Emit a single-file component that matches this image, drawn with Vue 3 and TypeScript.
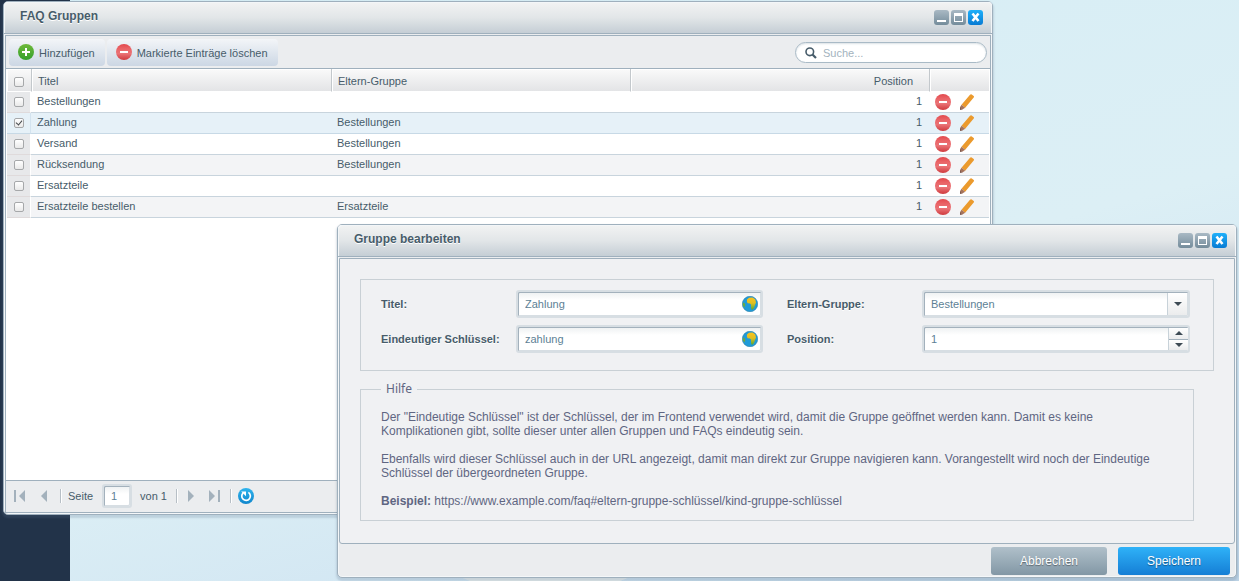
<script setup lang="ts">
import { computed, ref } from 'vue'

interface Group {
  id: number
  title: string
  parent: string
  position: number
  checked: boolean
}

const groups = ref<Group[]>([
  { id: 1, title: 'Bestellungen', parent: '', position: 1, checked: false },
  { id: 2, title: 'Zahlung', parent: 'Bestellungen', position: 1, checked: true },
  { id: 3, title: 'Versand', parent: 'Bestellungen', position: 1, checked: false },
  { id: 4, title: 'Rücksendung', parent: 'Bestellungen', position: 1, checked: false },
  { id: 5, title: 'Ersatzteile', parent: '', position: 1, checked: false },
  { id: 6, title: 'Ersatzteile bestellen', parent: 'Ersatzteile', position: 1, checked: false },
])

const search = ref('')
const page = ref('1')
const form = ref({ title: 'Zahlung', key: 'zahlung', parent: 'Bestellungen', position: '1' })

const allChecked = computed({
  get: () => groups.value.every((g) => g.checked),
  set: (value: boolean) => groups.value.forEach((g) => (g.checked = value)),
})

function step(delta: number) {
  form.value.position = String(Number(form.value.position) + delta)
}
</script>

<template>
  <main class="desktop">
    <svg class="defs" width="0" height="0" aria-hidden="true">
      <defs>
        <linearGradient id="g-red" x1="0" y1="0" x2="0" y2="1">
          <stop offset="0" stop-color="#e2494d" />
          <stop offset="0.3" stop-color="#ea6467" />
          <stop offset="0.6" stop-color="#ea7376" />
          <stop offset="1" stop-color="#cf3a3e" />
        </linearGradient>
        <linearGradient id="g-green" x1="0" y1="0" x2="0" y2="1">
          <stop offset="0" stop-color="#6fb93a" />
          <stop offset="1" stop-color="#33a02c" />
        </linearGradient>
        <linearGradient id="g-blue" x1="0" y1="0" x2="0" y2="1">
          <stop offset="0" stop-color="#2fb4ee" />
          <stop offset="1" stop-color="#0f86cc" />
        </linearGradient>
        <linearGradient id="g-land" x1="0" y1="0" x2="0" y2="1">
          <stop offset="0" stop-color="#fbc21c" />
          <stop offset="0.45" stop-color="#e0bf22" />
          <stop offset="1" stop-color="#4fa53a" />
        </linearGradient>
        <symbol id="i-minus" viewBox="0 0 16 16">
          <circle cx="8" cy="8" r="8" fill="url(#g-red)" />
          <rect x="4" y="7" width="8" height="2" fill="#fff" />
        </symbol>
        <symbol id="i-plus" viewBox="0 0 16 16">
          <circle cx="8" cy="8" r="8" fill="url(#g-green)" />
          <path d="M7 4h2v3h3v2H9v3H7V9H4V7h3z" fill="#fff" />
        </symbol>
        <symbol id="i-pencil" viewBox="0 0 16 16">
          <path d="M11 .8Q11.800-.2 12.700.4L14.700 2Q15.300 2.700 14.700 3.500L6.200 13.800 2.500 10.800z" fill="#eb9a2d" />
          <path d="M2.500 10.800 6.200 13.800 3.300 15.500 1 13.200z" fill="#a7735a" />
          <path d="M1 12.800 3.500 15.400 1 16z" fill="#80584c" />
        </symbol>
        <symbol id="i-globe" viewBox="0 0 16 16">
          <circle cx="8" cy="8" r="7.700" fill="#209bd8" stroke="#2b7fa6" stroke-width=".6" />
          <path d="M5 3.600 7 1.800 10.500 1.500 13.200 3.300 14 6.500 13 9 11.800 12.500 10 14 9 12.500 9 8.500 7.800 7.400 5.600 7.200 4.900 5.800z" fill="url(#g-land)" />
          <path d="M.800 6.600 2.600 7.300 3.400 9 2.400 11.500 1 9.500z" fill="#69a944" />
        </symbol>
        <symbol id="i-min" viewBox="0 0 15 15"><rect x="3" y="10" width="9" height="2" fill="#fff" /></symbol>
        <symbol id="i-max" viewBox="0 0 15 15">
          <path d="M3 3h9v9H3zM4 6v5h7V6z" fill="#fff" fill-rule="evenodd" />
        </symbol>
        <symbol id="i-close" viewBox="0 0 15 15">
          <path d="M4.500 3.500 10.500 11M10.500 3.500 4.500 11" stroke="#fff" stroke-width="2.600" />
        </symbol>
      </defs>
    </svg>

    <div class="dock"></div>

    <section class="window list-window" aria-labelledby="list-title">
      <header class="titlebar">
        <h1 id="list-title">FAQ Gruppen</h1>
        <div class="tools">
          <button type="button" aria-label="Minimieren"><svg><use href="#i-min" /></svg></button>
          <button type="button" aria-label="Maximieren"><svg><use href="#i-max" /></svg></button>
          <button type="button" class="close" aria-label="Schließen"><svg><use href="#i-close" /></svg></button>
        </div>
      </header>
      <div class="body">
        <div class="toolbar">
          <button type="button" class="tool"><svg class="icon"><use href="#i-plus" /></svg>Hinzufügen</button>
          <button type="button" class="tool"><svg class="icon"><use href="#i-minus" /></svg>Markierte Einträge löschen</button>
          <label class="search">
            <svg width="12" height="12" viewBox="0 0 12 12" aria-hidden="true">
              <circle cx="4.800" cy="4.800" r="3.800" fill="none" stroke="#475c6a" stroke-width="1.600" />
              <path d="M7.500 7.500 11 11" stroke="#475c6a" stroke-width="2.200" />
            </svg>
            <input v-model="search" type="text" placeholder="Suche..." aria-label="Suche" />
          </label>
        </div>

        <div class="grid">
          <table>
            <colgroup>
              <col class="c-check" /><col class="c-title" /><col /><col /><col class="c-actions" />
            </colgroup>
            <thead>
              <tr>
                <th class="check"><input v-model="allChecked" type="checkbox" aria-label="Alle auswählen" /></th>
                <th>Titel</th>
                <th>Eltern-Gruppe</th>
                <th class="num">Position</th>
                <th></th>
              </tr>
            </thead>
            <tbody>
              <tr v-for="g in groups" :key="g.id" :class="{ selected: g.checked }">
                <td class="check"><input v-model="g.checked" type="checkbox" :aria-label="g.title" /></td>
                <td>{{ g.title }}</td>
                <td>{{ g.parent }}</td>
                <td class="num">{{ g.position }}</td>
                <td class="actions">
                  <div>
                    <button type="button" aria-label="Löschen"><svg class="icon"><use href="#i-minus" /></svg></button>
                    <button type="button" aria-label="Bearbeiten"><svg class="icon"><use href="#i-pencil" /></svg></button>
                  </div>
                </td>
              </tr>
            </tbody>
          </table>
        </div>

        <nav class="pager" aria-label="Seiten">
          <button type="button" aria-label="Erste Seite">
            <svg width="12" height="12"><path d="M0 0h2v12H0zM11 0v12L5 6z" /></svg>
          </button>
          <button type="button" class="prev" aria-label="Vorherige Seite">
            <svg width="6" height="12"><path d="M6 0v12L0 6z" /></svg>
          </button>
          <i class="sep"></i>
          <label for="page">Seite</label>
          <span class="field page"><input id="page" v-model="page" type="text" /></span>
          <span>von 1</span>
          <i class="sep"></i>
          <button type="button" class="next" aria-label="Nächste Seite">
            <svg width="6" height="12"><path d="M0 0v12l6-6z" /></svg>
          </button>
          <button type="button" class="last" aria-label="Letzte Seite">
            <svg width="12" height="12"><path d="M0 0v12l6-6zM9 0h2v12H9z" /></svg>
          </button>
          <i class="sep"></i>
          <button type="button" aria-label="Aktualisieren">
            <svg class="icon refresh" viewBox="0 0 16 16">
              <circle cx="8" cy="8" r="8" fill="url(#g-blue)" />
              <path d="M10.400 4.400A4.300 4.300 0 1 1 5.200 4.800" fill="none" stroke="#fff" stroke-width="1.700" />
              <path d="M3.200 3.400H8v4.800z" fill="#fff" />
            </svg>
          </button>
        </nav>
      </div>
    </section>

    <section class="window edit-window" aria-labelledby="edit-title">
      <header class="titlebar">
        <h2 id="edit-title">Gruppe bearbeiten</h2>
        <div class="tools">
          <button type="button" aria-label="Minimieren"><svg><use href="#i-min" /></svg></button>
          <button type="button" aria-label="Maximieren"><svg><use href="#i-max" /></svg></button>
          <button type="button" class="close" aria-label="Schließen"><svg><use href="#i-close" /></svg></button>
        </div>
      </header>
      <div class="body form-body">
        <form id="group-form" class="panel" @submit.prevent>
          <div class="row">
            <label for="f-title">Titel:</label>
            <span class="field">
              <input id="f-title" v-model="form.title" type="text" />
              <button type="button" class="globe" aria-label="Titel übersetzen"><svg class="icon"><use href="#i-globe" /></svg></button>
            </span>
          </div>
          <div class="row">
            <label for="f-parent">Eltern-Gruppe:</label>
            <span class="field">
              <select id="f-parent" v-model="form.parent">
                <option v-for="g in groups" :key="g.id">{{ g.title }}</option>
              </select>
              <span class="trigger"><svg width="8" height="4"><path d="M0 0h8L4 4z" /></svg></span>
            </span>
          </div>
          <div class="row">
            <label for="f-key">Eindeutiger Schlüssel:</label>
            <span class="field">
              <input id="f-key" v-model="form.key" type="text" />
              <button type="button" class="globe" aria-label="Schlüssel übersetzen"><svg class="icon"><use href="#i-globe" /></svg></button>
            </span>
          </div>
          <div class="row">
            <label for="f-position">Position:</label>
            <span class="field">
              <input id="f-position" v-model="form.position" type="text" inputmode="numeric" />
              <span class="spinner">
                <button type="button" aria-label="Erhöhen" @click="step(1)"><svg width="8" height="4"><path d="M0 4h8L4 0z" /></svg></button>
                <button type="button" aria-label="Verringern" @click="step(-1)"><svg width="8" height="4"><path d="M0 0h8L4 4z" /></svg></button>
              </span>
            </span>
          </div>
        </form>
        <fieldset class="help">
          <legend>Hilfe</legend>
          <p>Der "Eindeutige Schlüssel" ist der Schlüssel, der im Frontend verwendet wird, damit die Gruppe geöffnet werden kann. Damit es keine Komplikationen gibt, sollte dieser unter allen Gruppen und FAQs eindeutig sein.</p>
          <p>Ebenfalls wird dieser Schlüssel auch in der URL angezeigt, damit man direkt zur Gruppe navigieren kann. Vorangestellt wird noch der Eindeutige Schlüssel der übergeordneten Gruppe.</p>
          <p><strong>Beispiel:</strong> https://www.example.com/faq#eltern-gruppe-schlüssel/kind-gruppe-schlüssel</p>
        </fieldset>
      </div>
      <footer class="actions-bar">
        <button type="button" class="btn cancel">Abbrechen</button>
        <button type="submit" form="group-form" class="btn save">Speichern</button>
      </footer>
    </section>
  </main>
</template>

<style>
html, body, #app { height: 100%; }
body { margin: 0; overflow: hidden; }
</style>

<style scoped>
* { box-sizing: border-box; }
.desktop {
  position: relative;
  height: 100%;
  overflow: hidden;
  font: 11px/14px "Liberation Sans", Arial, sans-serif;
  color: #475c6a;
  background:
    radial-gradient(ellipse 95px 25px at 44% 566px, #e6eeee 98%, transparent 100%),
    linear-gradient(165deg, #d5edf5 0%, #dceff5 55%, #d3e7f3 75%, #bcd3e5 100%);
}
.defs { position: absolute; }
.dock { width: 70px; height: 100%; background: #223349; }
button { margin: 0; padding: 0; border: 0; background: none; font: inherit; color: inherit; cursor: pointer; }
svg { display: block; }
.icon { width: 16px; height: 16px; flex: none; }

.window {
  position: absolute;
  display: flex;
  flex-direction: column;
  border: 1px solid #9fb0bd;
  border-radius: 5px;
  background: #ebedef;
  box-shadow: inset 0 0 0 1px #f4f7f9, 0 2px 2px 1px rgba(90, 115, 140, 0.22);
}
.list-window { left: 3px; right: 246px; top: 1px; bottom: 66px; padding-bottom: 1px; }
.edit-window { left: 337px; right: 2px; top: 224px; bottom: 3px; }
.titlebar {
  display: flex;
  align-items: center;
  justify-content: space-between;
  height: 32px;
  flex: none;
  padding: 0 9px 2px 16px;
  border-bottom: 1px solid #9fb0bd;
  border-radius: 4px 4px 0 0;
  background: linear-gradient(#f2f3f3, #e2e6e8 50%, #c5ced5);
  box-shadow: inset 1px 1px 0 #f3f6f8, inset -1px 0 0 #f3f6f8;
}
.titlebar h1, .titlebar h2 { margin: 0; font-size: 12px; line-height: 15px; text-shadow: 0 1px 0 #fff; }
.tools { display: flex; gap: 2px; padding-top: 2px; }
.tools button { width: 15px; height: 15px; border-radius: 3px; background: linear-gradient(#a9b9c4, #748c9b); }
.tools .close { background: linear-gradient(#1fb0fa, #087bd3); }
.tools svg { width: 15px; height: 15px; }
.body {
  display: flex;
  flex-direction: column;
  flex: 1;
  min-height: 0;
  margin: 1px 1px 0;
  border: 1px solid #9fb0bd;
}

.toolbar {
  display: flex;
  align-items: center;
  gap: 2px;
  height: 33px;
  flex: none;
  padding: 1px 3px 0;
  border-bottom: 1px solid #9fb0bd;
}
.tool {
  display: flex;
  align-items: center;
  gap: 5px;
  height: 27px;
  padding: 0 10px 0 9px;
  border-radius: 4px;
  background: linear-gradient(#f3f5f8, #dfe6ee 50%, #ccd7e4);
}
.tool .icon { margin-bottom: 2px; }
.search {
  display: flex;
  align-items: center;
  gap: 6px;
  width: 192px;
  height: 21px;
  margin-left: auto;
  padding: 0 9px;
  border: 1px solid #a9bac6;
  border-radius: 11px;
  background: #fff;
  box-shadow: inset 0 1px 2px #dbe2e6;
}
.search input { flex: 1; min-width: 0; padding: 0; border: 0; outline: 0; background: none; font: inherit; color: inherit; }
.search input::placeholder { color: #a3b3be; opacity: 1; }

.grid { flex: 1; min-height: 0; padding: 0 1px; background: #fff; }
table { width: 100%; table-layout: fixed; border-collapse: separate; border-spacing: 0; }
.c-check { width: 24px; }
.c-title { width: 300px; }
.c-actions { width: 60px; }
th, td { padding: 0 7px 0 6px; text-align: left; font-weight: normal; white-space: nowrap; }
th {
  height: 23px;
  padding: 2px 16px 0 6px;
  border-left: 1px solid #c3c8cc;
  border-bottom: 1px solid #fff;
  background: linear-gradient(#fafafa, #e3e4e6);
  box-shadow: inset 1px 1px 0 #fff;
}
td { height: 21px; border-bottom: 1px solid #c8d4dd; }
td:not(.check) { padding-bottom: 2px; }
tbody tr:nth-child(even) td { background: #f3f4f6; }
tbody tr td.check { background: #e7e8ea; border-bottom-color: #dfdadb; border-right: 1px solid #fff; }
tbody tr.selected td, tbody tr.selected td.check { background: #e6f1f8; border-bottom-color: #c7d9e6; }
tbody tr.selected td.check { border-right-color: #d3e3ef; }
.num { text-align: right; }
th.check { border-left: 0; }
.check { padding: 0 0 0 7px; }
.check input {
  display: block;
  appearance: none;
  width: 10px;
  height: 10px;
  margin: 0;
  border: 1px solid #a6a8aa;
  border-radius: 2px;
  background: linear-gradient(#fff, #e9e9e9);
}
th.check input { margin-top: 4px; }
.check input:checked { position: relative; }
.check input:checked::after {
  content: "";
  position: absolute;
  left: 2px;
  top: 0;
  width: 3px;
  height: 5px;
  border: solid #45494c;
  border-width: 0 1px 1px 0;
  transform: rotate(40deg);
}
td.actions:not(.check) { padding: 0 0 0 6px; }
.actions div { display: flex; gap: 8px; }

.pager { display: flex; align-items: center; height: 32px; flex: none; padding: 0 8px 2px; border-top: 1px solid #9fb0bd; }
.pager path { fill: #a3b1bc; }
.pager .refresh path:nth-child(2) { fill: none; }
.pager .refresh path:nth-child(3) { fill: #fff; }
.pager .prev { margin: 0 13px 0 15px; }
.sep { width: 1px; height: 14px; margin-right: 7px; background: #b7bfc6; box-shadow: 1px 0 0 #fff; }
.pager .next { margin: 0 15px 0 4px; }
.pager .last { margin-right: 9px; }
.field.page { flex: none; width: 30px; height: 24px; margin: 0 8px 0 9px; }
.field.page + span { margin-right: 9px; }

.field {
  display: flex;
  flex: 1;
  min-width: 0;
  height: 28px;
  border: 2px solid #d7dee3;
  border-radius: 3px;
  background: linear-gradient(#edf0f1, #fff 8px);
  box-shadow: inset 1px 1px 0 #a3b1bc, inset -1px -1px 0 #d7dee3;
}
.field input, .field select {
  flex: 1;
  min-width: 0;
  padding: 0 7px;
  border: 0;
  outline: 0;
  appearance: none;
  background: none;
  font: inherit;
  color: #5d7f95;
}
.globe { align-self: center; margin-right: 3px; }
.trigger, .spinner { width: 20px; margin: 1px; border-left: 1px solid #c8d2d9; fill: #3d4a54; }
.trigger { display: grid; place-items: center; background: linear-gradient(#fff, #ebeced); pointer-events: none; }
.spinner { display: flex; flex-direction: column; margin-right: 0; }
.spinner button { display: grid; place-items: center; flex: 1; background: linear-gradient(#fff, #ebeced); }
.spinner button + button { border-top: 1px solid #a3b1bc; }

.form-body { margin-bottom: 1px; padding: 20px 20px 0; border-radius: 0 0 3px 3px; background: #f0f1f3; }
.panel {
  display: grid;
  grid-template-columns: 382fr 403fr;
  gap: 7px 24px;
  margin: 0;
  padding: 10px 23px 17px 20px;
  border: 1px solid #c9d0d5;
}
.row { display: flex; align-items: center; }
.row label { width: 135px; flex: none; font-weight: bold; text-shadow: 0 1px 0 #fff; }
.help {
  min-width: 0;
  margin: 11px 20px 0 0;
  padding: 14px 20px 12px;
  border: 1px solid #c9d0d5;
  font-size: 12px;
  line-height: 14px;
  color: #5f6682;
}
.help legend { padding: 0 5px; font: 12px/14px "Noto Sans", "Open Sans", sans-serif; }
.help p { margin: 0 0 14px; }
.help p:last-child { margin-bottom: 0; }
.actions-bar { display: flex; justify-content: flex-end; gap: 11px; flex: none; padding: 2px 6px; }
.btn {
  height: 28px;
  border-radius: 3px;
  font-size: 12px;
  color: #fff;
  text-shadow: 0 1px 1px rgba(0, 0, 0, 0.4);
}
.cancel { width: 116px; background: linear-gradient(#b0c0ca, #8297a5); }
.save { width: 112px; background: linear-gradient(#2fb2f8, #157ed5); }
</style>
